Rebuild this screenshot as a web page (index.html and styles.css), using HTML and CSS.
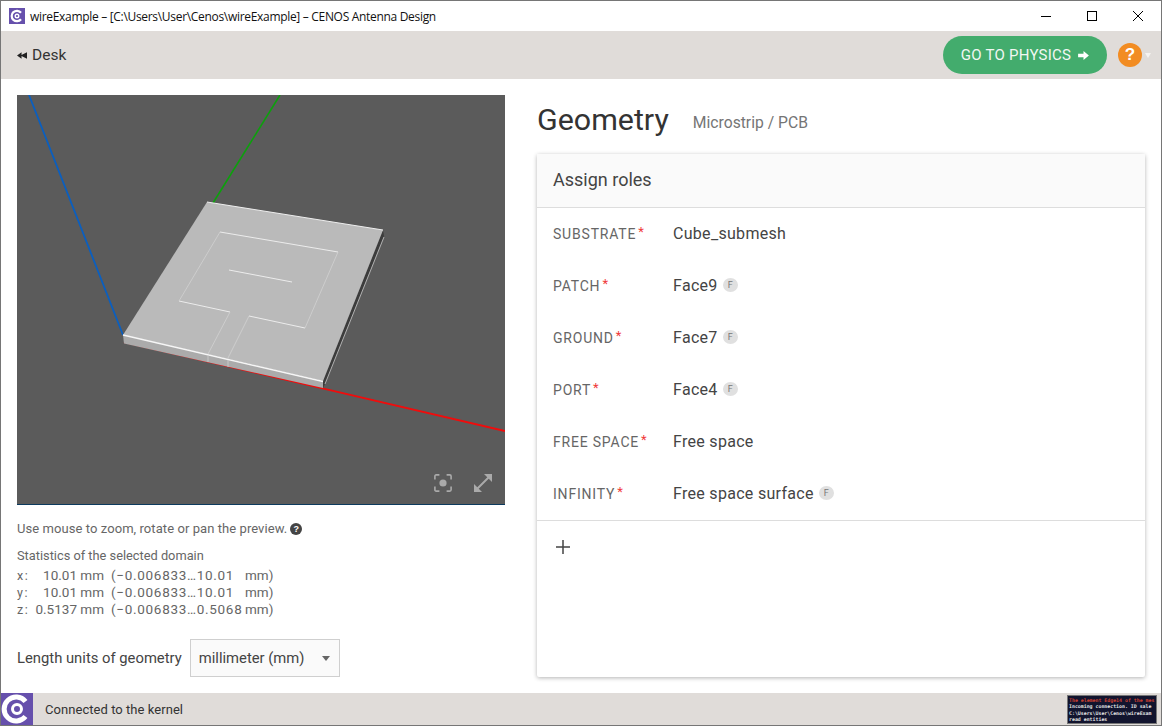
FILE: index.html
```html
<!DOCTYPE html>
<html lang="en">
<head>
<meta charset="utf-8">
<title>wireExample – CENOS Antenna Design</title>
<link rel="stylesheet" href="styles.css">
</head>
<body>
<div class="window">
  <header class="titlebar">
    <svg class="app-icon" viewBox="0 0 16 16"><rect width="16" height="16" fill="#6650ac"/><path d="M12 4.800A5.200 5.200 0 1 0 12 11.200" fill="none" stroke="#fff" stroke-width="2.200"/><circle cx="8" cy="8" r="1.800" fill="none" stroke="#fff" stroke-width="1.400"/></svg>
    <span class="title-text">wireExample – [C:\Users\User\Cenos\wireExample] – CENOS Antenna Design</span>
    <div class="win-controls">
      <svg class="win-btn" viewBox="0 0 46 30"><path d="M18 15.500H28" stroke="#000" fill="none"/></svg>
      <svg class="win-btn" viewBox="0 0 46 30"><rect x="18.500" y="10.500" width="9" height="9" stroke="#000" fill="none"/></svg>
      <svg class="win-btn" viewBox="0 0 46 30"><path d="M18 10L28 20M28 10L18 20" stroke="#000" fill="none"/></svg>
    </div>
  </header>

  <nav class="toolbar">
    <div class="back"><svg class="back-icon" viewBox="0 0 11 7"><path d="M0 3.500L5 0V3L6 2.300 11 0V7L6 4.700 5 4V7Z" fill="#222"/></svg><span>Desk</span></div>
    <div class="toolbar-right">
      <button class="physics-btn">GO TO PHYSICS <svg class="arrow" viewBox="0 0 12 10"><path d="M0 3H6V0L12 5L6 10V7H0Z" fill="#fff"/></svg></button>
      <span class="help">?</span>
      <span class="help-caret"></span>
    </div>
  </nav>

  <main class="content">
    <section class="left">
      <div class="viewport">
        <svg class="scene" viewBox="0 0 488 410">
          <g transform="translate(-17 -95)" fill="none">
            <path d="M29 95L123 335" stroke="#0a5fc0" stroke-width="1.800"/>
            <path d="M280 95L213 203" stroke="#0ca00c" stroke-width="1.600"/>
            <path d="M124 342L505 431" stroke="#f00c0c" stroke-width="1.800"/>
            <path d="M383 230L384 236L325 384L323 388L323 381Z" fill="#3c3c3c"/>
            <path d="M384 237L325 384" stroke="#b0b0b0"/>
            <path d="M123 335L323 381L323 388L124 343.500Z" fill="#ababab"/>
            <path d="M207 202L383 230L323 381L123 335Z" fill="#bababa"/>
            <path d="M123 335L323 381.500" stroke="#f6f6f6" stroke-width="1.500"/>
            <path d="M207 202L383 230" stroke="#eeeeee"/>
            <path d="M220 232L338 252M179 301L230 312M249 316L305 328M229 270L292 282" stroke="#ececec"/>
            <path d="M220 232L179 301M338 252L305 328M230 312L208 354M249 316L228 358" stroke="#d2d2d2" stroke-width=".8"/>
            <path d="M208 355L208 362M228 360L228 367" stroke="#cfcfcf" stroke-width=".8"/>
          </g>
        </svg>
        <div class="view-tools">
          <svg class="view-icon" viewBox="0 0 20 20"><path d="M1 6V2.500Q1 1 2.500 1H6M14 1H17.500Q19 1 19 2.500V6M19 14V17.500Q19 19 17.500 19H14M6 19H2.500Q1 19 1 17.500V14" fill="none" stroke="#aaa" stroke-width="1.800"/><circle cx="10" cy="10" r="4" fill="#aaa"/></svg>
          <svg class="view-icon" viewBox="0 0 20 20"><path d="M3 17L17 3" stroke="#aaa" stroke-width="2"/><path d="M11 1H19V9ZM1 11V19H9Z" fill="#aaa"/></svg>
        </div>
      </div>

      <p class="hint">Use mouse to zoom, rotate or pan the preview. <span class="hint-icon">?</span></p>

      <div class="stats">
        <div class="stats-title">Statistics of the selected domain</div>
        <div class="stats-row"><span class="axis">x:</span><span class="size">10.01 mm</span><span class="range">(−0.006833…10.01</span><span class="unit">mm)</span></div>
        <div class="stats-row"><span class="axis">y:</span><span class="size">10.01 mm</span><span class="range">(−0.006833…10.01</span><span class="unit">mm)</span></div>
        <div class="stats-row"><span class="axis">z:</span><span class="size">0.5137 mm</span><span class="range">(−0.006833…0.5068</span><span class="unit">mm)</span></div>
      </div>

      <div class="units">
        <span>Length units of geometry</span>
        <div class="select"><span>millimeter (mm)</span><i class="select-caret"></i></div>
      </div>
    </section>

    <section class="right">
      <div class="heading"><h1>Geometry</h1><span class="subtitle">Microstrip / PCB</span></div>
      <div class="card">
        <div class="card-head">Assign roles</div>
        <div class="roles">
          <div class="role"><span class="role-name">SUBSTRATE<sup>*</sup></span><span class="role-value">Cube_submesh</span></div>
          <div class="role"><span class="role-name">PATCH<sup>*</sup></span><span class="role-value">Face9<i class="chip">F</i></span></div>
          <div class="role"><span class="role-name">GROUND<sup>*</sup></span><span class="role-value">Face7<i class="chip">F</i></span></div>
          <div class="role"><span class="role-name">PORT<sup>*</sup></span><span class="role-value">Face4<i class="chip">F</i></span></div>
          <div class="role"><span class="role-name">FREE SPACE<sup>*</sup></span><span class="role-value">Free space</span></div>
          <div class="role"><span class="role-name">INFINITY<sup>*</sup></span><span class="role-value">Free space surface<i class="chip">F</i></span></div>
        </div>
        <div class="card-foot"><svg class="plus" viewBox="0 0 14 14"><path d="M7 0V14M0 7H14" stroke="#444" stroke-width="1.500"/></svg></div>
      </div>
    </section>
  </main>

  <footer class="statusbar">
    <svg class="status-logo" viewBox="0 0 32 32"><rect width="32" height="32" fill="#6650ac"/><path d="M24.500 8.500A12 12 0 1 0 24.500 23.500" fill="none" stroke="#fff" stroke-width="5"/><circle cx="16" cy="16" r="4.500" fill="none" stroke="#fff" stroke-width="3"/></svg>
    <span class="status-text">Connected to the kernel</span>
    <div class="console">
      <div class="console-err">The element Edge14 of the mes</div>
      <div>Incoming connection. ID sale</div>
      <div>C:\Users\User\Cenos\wireExam</div>
      <div>read entities</div>
    </div>
  </footer>
</div>
</body>
</html>
```
FILE: styles.css
```css
* { box-sizing: border-box; }
html, body { margin: 0; height: 100%; overflow: hidden; }
body { font-family: Roboto, "Liberation Sans", sans-serif; color: #333; background: #fff; }
.window { width: 1162px; height: 726px; display: flex; flex-direction: column; border: 1px solid #767676; }

.titlebar { height: 30px; flex: none; display: flex; align-items: center; padding-left: 8px; background: #fff; }
.app-icon { width: 16px; height: 16px; margin-right: 5px; }
.title-text { font: 12px "Open Sans", "Liberation Sans", sans-serif; color: #111; letter-spacing: -.31px; }
.win-controls { margin-left: auto; display: flex; }
.win-btn { width: 46px; height: 30px; }

.toolbar { height: 48px; flex: none; display: flex; align-items: center; justify-content: space-between; background: #e0dcd9; padding: 0 10px 0 16px; }
.back { display: flex; align-items: center; gap: 5px; font-size: 15.500px; color: #333; line-height: 20px; }
.back-icon { width: 10px; height: 7px; display: block; }
.toolbar-right { display: flex; align-items: center; }
.physics-btn { height: 38px; width: 164px; border: 0; border-radius: 19px; background: #43ac6d; color: #f2f7f3; font: 400 15px Roboto, sans-serif; letter-spacing: .25px; display: flex; align-items: center; justify-content: center; gap: 7px; padding: 0; }
.arrow { width: 11px; height: 9px; }
.help { width: 24px; height: 24px; margin-left: 11px; border-radius: 50%; background: #f28c22; color: #fff; font: 700 17px/24px "Liberation Sans", sans-serif; text-align: center; }
.help-caret { margin-left: 3px; width: 0; height: 0; border: 3.500px solid transparent; border-top: 5px solid #f5f3f1; border-bottom: 0; }

.content { flex: 1; min-height: 0; display: flex; padding: 16px; gap: 32px; }
.left { width: 488px; flex: none; display: flex; flex-direction: column; }
.viewport { position: relative; width: 488px; height: 410px; background: #5b5b5b; border-bottom: 1px solid #0c3a5e; flex: none; }
.scene { display: block; width: 488px; height: 410px; }
.view-tools { position: absolute; right: 12px; bottom: 11px; display: flex; align-items: center; gap: 21px; }
.view-icon { width: 18px; height: 18px; display: block; }
.view-icon + .view-icon { width: 20px; height: 20px; }

.hint { margin: 16px 0 0; height: 15px; font-size: 13px; line-height: 15px; color: #666; display: flex; align-items: center; gap: 3px; letter-spacing: .07px; }
.hint-icon { width: 12px; height: 12px; border-radius: 50%; background: #444; color: #fff; font: 700 9px/12px "Liberation Sans", sans-serif; text-align: center; }
.stats { margin-top: 12px; font-size: 12.800px; color: #666; }
.stats-title { line-height: 15px; margin-bottom: 4px; }
.stats-row { display: flex; height: 17px; line-height: 17px; font-size: 13.500px; }
.axis { width: 18px; letter-spacing: 1.500px; font-size: 12.500px; }
.stats-row .size { width: 69px; text-align: right; margin-right: 7px; white-space: nowrap; }
.stats-row .range { width: 134px; white-space: nowrap; letter-spacing: .7px; }
.units { margin-top: 21px; display: flex; align-items: center; gap: 8px; font-size: 14.800px; color: #444; }
.select { width: 150px; height: 38px; display: flex; align-items: center; justify-content: space-between; padding: 0 9px 0 8px; background: #fafafa; border: 1px solid #cfcfcf; }
.select-caret { width: 0; height: 0; border: 4.500px solid transparent; border-top: 5px solid #666; border-bottom: 0; }

.right { flex: 1; min-width: 0; display: flex; flex-direction: column; }
.heading { height: 59px; flex: none; display: flex; align-items: baseline; gap: 24px; }
.heading h1 { margin: 0; font-weight: 400; font-size: 30.400px; line-height: 50px; color: #333; }
.subtitle { font-size: 15.700px; color: #757575; position: relative; top: -2px; }
.card { flex: 1; display: flex; flex-direction: column; background: #fff; border-radius: 2px; box-shadow: 0 1px 4px rgba(0,0,0,.3); }
.card-head { height: 54px; flex: none; display: flex; align-items: center; padding: 0 0 2px 16px; background: #fafafa; border-bottom: 1px solid #ddd; font-size: 18px; color: #444; }
.roles { border-bottom: 1px solid #ddd; }
.role { height: 52px; display: flex; align-items: center; padding: 0 0 2px 16px; }
.role-name { width: 120px; font-size: 14px; color: #666; letter-spacing: .8px; position: relative; top: 1px; }
.role-name sup { color: #f03a3a; font-size: 13px; line-height: 0; margin-left: 2px; vertical-align: 3px; }
.role-value { display: flex; align-items: center; font-size: 16px; color: #444; letter-spacing: .3px; }
.chip { width: 15px; height: 14px; margin-left: 5px; border-radius: 50%; background: #e0e0e0; color: #777; font: 9px/14px Roboto, sans-serif; text-align: center; letter-spacing: 0; }
.card-foot { flex: 1; padding: 19px 0 0 19px; }
.plus { width: 14px; height: 14px; display: block; }

.statusbar { height: 32px; flex: none; display: flex; align-items: center; background: #e0dcd9; }
.status-logo { width: 32px; height: 32px; display: block; }
.status-text { margin-left: 12px; font-size: 13px; color: #333; letter-spacing: .05px; }
.console { margin: 0 4px 0 auto; width: 90px; height: 29px; overflow: hidden; background: #12142e; border: 1px solid #777; padding: 1px; color: #e4e4e4; font: 700 4.900px/6.500px "DejaVu Sans Mono", monospace; white-space: nowrap; }
.console-err { color: #d04030; }
```
